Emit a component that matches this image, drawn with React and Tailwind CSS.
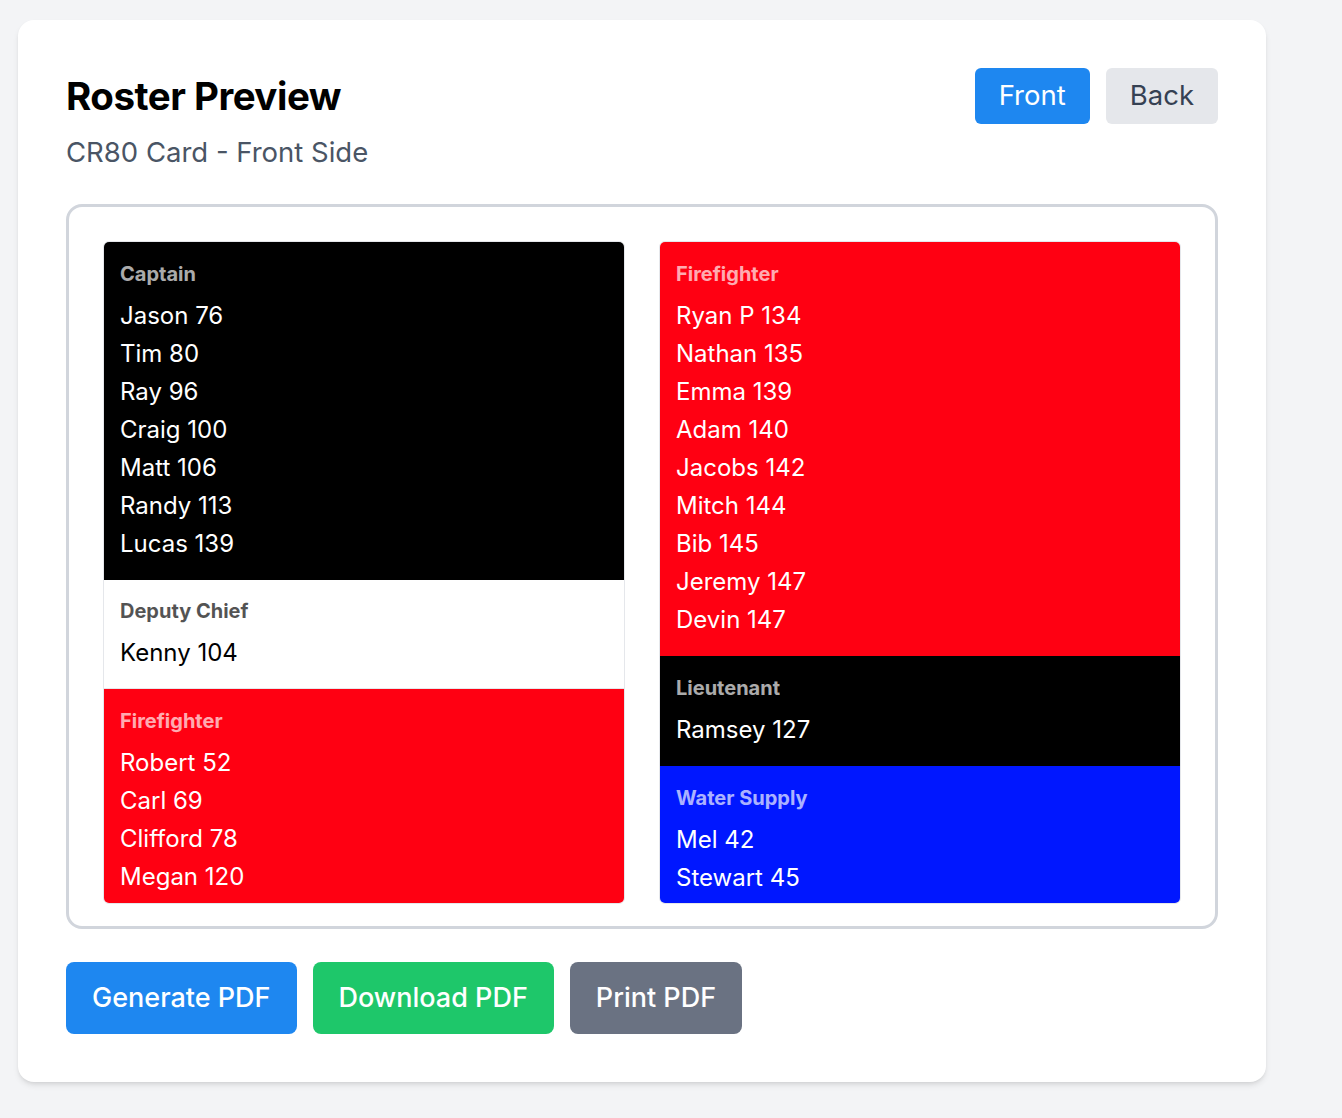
const leftColumn = [
  { role: 'Captain', tone: 'black', names: ['Jason 76', 'Tim 80', 'Ray 96', 'Craig 100', 'Matt 106', 'Randy 113', 'Lucas 139'] },
  { role: 'Deputy Chief', tone: 'white', names: ['Kenny 104'] },
  { role: 'Firefighter', tone: 'red', names: ['Robert 52', 'Carl 69', 'Clifford 78', 'Megan 120'] },
]

const rightColumn = [
  { role: 'Firefighter', tone: 'red', names: ['Ryan P 134', 'Nathan 135', 'Emma 139', 'Adam 140', 'Jacobs 142', 'Mitch 144', 'Bib 145', 'Jeremy 147', 'Devin 147'] },
  { role: 'Lieutenant', tone: 'black', names: ['Ramsey 127'] },
  { role: 'Water Supply', tone: 'blue', names: ['Mel 42', 'Stewart 45'] },
]

const tones = {
  black: 'bg-black text-white pt-[18px] pb-[17px]',
  white: 'bg-white text-black border-b border-gray-200 pt-[17px] pb-[16px]',
  red: 'bg-[#ff0012] text-white pt-[18px] pb-[17px]',
  blue: 'bg-[#0017ff] text-white pt-[18px] pb-[17px]',
}

function Section({ role, tone, names }) {
  return (
    <div className={`px-4 ${tones[tone]}`}>
      <div className="text-[20px] leading-[28px] font-bold opacity-[0.67] mb-[9px]">{role}</div>
      {names.map((name) => (
        <div key={name} className="text-[24px] leading-[38px]">
          {name}
        </div>
      ))}
    </div>
  )
}

function Column({ sections }) {
  return (
    <div className="h-[663px] overflow-hidden rounded-md border border-gray-200">
      {sections.map((s, i) => (
        <Section key={i} {...s} />
      ))}
    </div>
  )
}

export default function App() {
  return (
    <div className="min-h-screen bg-[#f3f4f6] pl-[18px] pt-[20px] pb-[36px]" style={{ fontFamily: 'Inter, "Noto Sans", sans-serif' }}>
      <div className="w-[1248px] rounded-2xl bg-white p-12 shadow-md">
        <div className="flex items-start justify-between">
          <div>
            <h1 className="text-[38.5px] leading-[56px] font-bold text-black tracking-[-0.5px]">Roster Preview</h1>
            <p className="mt-[10px] text-[27.5px] leading-[36px] text-gray-600">CR80 Card - Front Side</p>
          </div>
          <div className="flex gap-4">
            <button className="h-14 rounded-md bg-[#1e87f0] px-6 text-[27.5px] text-white">Front</button>
            <button className="h-14 rounded-md bg-gray-200 px-6 text-[27.5px] text-gray-700">Back</button>
          </div>
        </div>

        <div className="mt-[34px] rounded-2xl border-[3px] border-gray-300 px-[34px] pt-[34px] pb-[22px]">
          <div className="grid grid-cols-2 gap-[34px]">
            <Column sections={leftColumn} />
            <Column sections={rightColumn} />
          </div>
        </div>

        <div className="mt-[33px] flex gap-4">
          <button className="h-[72px] rounded-lg bg-[#1e87f0] px-[26px] text-[27px] font-medium text-white">Generate PDF</button>
          <button className="h-[72px] rounded-lg bg-[#1ec76a] px-[26px] text-[27px] font-medium text-white">Download PDF</button>
          <button className="h-[72px] rounded-lg bg-gray-500 px-[26px] text-[27px] font-medium text-white">Print PDF</button>
        </div>
      </div>
    </div>
  )
}
